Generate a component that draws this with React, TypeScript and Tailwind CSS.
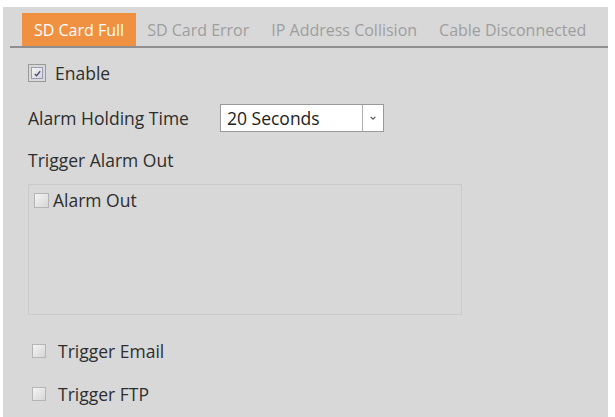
import React from 'react';

const tabs = ['SD Card Full', 'SD Card Error', 'IP Address Collision', 'Cable Disconnected'];

const Box: React.FC<{ checked?: boolean; className?: string }> = ({ checked, className = '' }) => (
  <span
    className={`flex items-center justify-center border border-[#8a8a8a] bg-gradient-to-br from-[#f4f4f4] to-[#d6d6d6] ${className}`}
  >
    {checked && (
      <svg viewBox="0 0 10 10" className="w-[9px] h-[9px]">
        <path d="M2 5.5 L4 7.5 L8 2.5" fill="none" stroke="#4a4a7a" strokeWidth="1.4" />
      </svg>
    )}
  </span>
);

const App: React.FC = () => {
  return (
    <div className="w-[615px] h-[417px] bg-white pt-[7px] pl-[3px] pr-[7px] font-['Open_Sans',sans-serif]">
      <div className="h-full bg-[#d8d8d8] text-[#2e2e2e] pl-[7px]">
        {/* Tabs */}
        <div className="flex items-end h-[41px] border-b-2 border-[#8f8f8f] text-[16px] text-[#9e9e9e]">
          {tabs.map((t, i) => (
            <div
              key={t}
              className={
                i === 0
                  ? 'ml-[12px] h-[33px] px-[12px] flex items-center bg-[#f09142] text-white'
                  : 'h-[33px] px-[11px] flex items-center'
              }
            >
              {t}
            </div>
          ))}
        </div>

        <div className="pl-[18px] text-[17.5px] leading-[24px]">
          {/* Enable */}
          <div className="flex items-center h-[24px] mt-[13px]">
            <span className="p-[2px] border border-[#9a9a9a]">
              <Box checked className="w-[12px] h-[12px] border-[#9a9aba]" />
            </span>
            <span className="ml-[9px]">Enable</span>
          </div>

          {/* Holding time */}
          <div className="flex items-center h-[28px] mt-[19px]">
            <span className="w-[192px]">Alarm Holding Time</span>
            <div className="flex h-[28px] w-[164px] bg-white border border-[#9a9a9a]">
              <span className="flex-1 flex items-center pl-[6px] text-[#222]">20 Seconds</span>
              <span className="w-[21px] border-l border-[#b0b0b0] flex items-center justify-center">
                <svg viewBox="0 0 10 10" className="w-[8px] h-[8px]">
                  <path d="M2 3.5 L5 6.5 L8 3.5" fill="none" stroke="#555" strokeWidth="1.5" />
                </svg>
              </span>
            </div>
          </div>

          {/* Trigger alarm out */}
          <div className="mt-[16px] h-[24px] flex items-center">Trigger Alarm Out</div>
          <div className="mt-[12px] w-[434px] h-[131px] border border-[#cacaca] pt-[3px] pl-[5px]">
            <div className="flex items-center">
              <Box className="w-[15px] h-[15px] border-[#b5b5b5]" />
              <span className="ml-[4px]">Alarm Out</span>
            </div>
          </div>

          {/* Email / FTP */}
          <div className="flex items-center h-[24px] mt-[24px] ml-[4px]">
            <Box className="w-[14px] h-[14px] border-[#b5b5b5]" />
            <span className="ml-[12px]">Trigger Email</span>
          </div>
          <div className="flex items-center h-[24px] mt-[19px] ml-[4px]">
            <Box className="w-[14px] h-[14px] border-[#b5b5b5]" />
            <span className="ml-[12px]">Trigger FTP</span>
          </div>
        </div>
      </div>
    </div>
  );
};

export default App;
